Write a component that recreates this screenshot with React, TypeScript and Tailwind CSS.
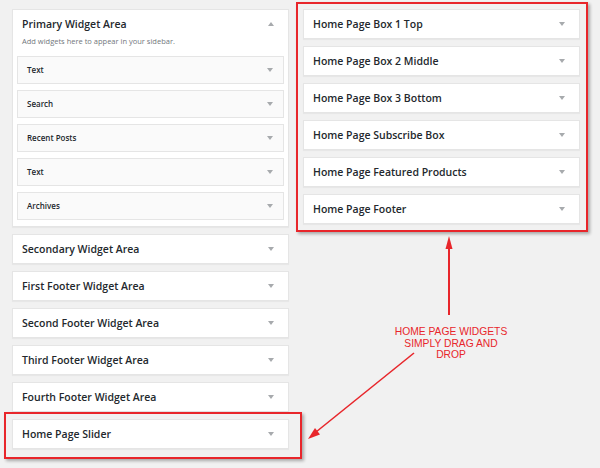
const leftAreas = [
  'Secondary Widget Area',
  'First Footer Widget Area',
  'Second Footer Widget Area',
  'Third Footer Widget Area',
  'Fourth Footer Widget Area',
];

const homeAreas = [
  'Home Page Box 1 Top',
  'Home Page Box 2 Middle',
  'Home Page Box 3 Bottom',
  'Home Page Subscribe Box',
  'Home Page Featured Products',
  'Home Page Footer',
];

const primaryWidgets = ['Text', 'Search', 'Recent Posts', 'Text', 'Archives'];

const Caret = ({ up = false }: { up?: boolean }) => (
  <svg width="6" height="4" viewBox="0 0 6 4" className="shrink-0">
    {up ? <polygon points="3,0 6,4 0,4" fill="#a7aaad" /> : <polygon points="0,0 6,0 3,4" fill="#a7aaad" />}
  </svg>
);

const AreaBar = ({ name }: { name: string }) => (
  <div className="h-[30px] bg-white border border-[#e5e5e5] shadow-[0_1px_1px_rgba(0,0,0,0.04)] flex items-center justify-between pl-[9px] pr-[14px]">
    <span className="text-[10.5px] font-semibold text-[#23282d] leading-none">{name}</span>
    <Caret />
  </div>
);

const App = () => {
  return (
    <div className="relative w-[600px] h-[468px] overflow-hidden bg-[#f1f1f1] font-['Open_Sans',sans-serif] flex items-start pt-[9px] pl-[12px]">
      {/* left column */}
      <div className="w-[277px] shrink-0 flex flex-col gap-[7px]">
        <div className="bg-white border border-[#e5e5e5] shadow-[0_1px_1px_rgba(0,0,0,0.04)] pt-[6px] pb-[6px] px-[4px]">
          <div className="flex items-center justify-between h-[16px] pl-[5px] pr-[10px]">
            <span className="text-[10.5px] font-semibold text-[#23282d] leading-none">Primary Widget Area</span>
            <Caret up />
          </div>
          <p className="mt-[3px] pl-[5px] text-[7.5px] leading-[12px] text-[#72777c]">
            Add widgets here to appear in your sidebar.
          </p>
          <div className="mt-[9px] flex flex-col gap-[6px]">
            {primaryWidgets.map((w, i) => (
              <div
                key={i}
                className="h-[28px] bg-[#fafafa] border border-[#e5e5e5] flex items-center justify-between pl-[9px] pr-[10px]"
              >
                <span className="text-[8px] font-semibold text-[#23282d] leading-none">{w}</span>
                <Caret />
              </div>
            ))}
          </div>
        </div>
        {leftAreas.map((a) => (
          <AreaBar key={a} name={a} />
        ))}
        <div className="-mt-[7px] -ml-[8px] w-[298px] border-2 border-[#e8262b] shadow-[2px_2px_3px_rgba(0,0,0,0.3)] pt-[5px] pb-[8px] pl-[6px] pr-[11px]">
          <AreaBar name="Home Page Slider" />
        </div>
      </div>

      {/* right column */}
      <div className="-mt-[7px] ml-[7px] w-[292px] shrink-0 border-2 border-[#e8262b] shadow-[2px_2px_3px_rgba(0,0,0,0.3)] pt-[5px] pb-[6px] pl-[5px] pr-[6px] flex flex-col gap-[7px]">
        {homeAreas.map((a) => (
          <AreaBar key={a} name={a} />
        ))}
      </div>

      {/* annotation */}
      <div className="absolute left-[371px] top-[326px] w-[160px] text-center font-['Liberation_Sans',Arial,sans-serif] text-[10.3px] leading-[11.5px] text-[#e8262b]">
        HOME PAGE WIDGETS
        <br />
        SIMPLY DRAG AND
        <br />
        DROP
      </div>
      <svg className="absolute inset-0 pointer-events-none" width="600" height="468" viewBox="0 0 600 468">
        <line x1="449" y1="247" x2="449" y2="315" stroke="#e8262b" strokeWidth="2" />
        <polygon points="449,236 445.5,249 452.5,249" fill="#e8262b" />
        <line x1="414" y1="353" x2="316" y2="432" stroke="#e8262b" strokeWidth="1.6" />
        <polygon points="308,439 320,434.5 315,428" fill="#e8262b" />
      </svg>
    </div>
  );
};

export default App;
